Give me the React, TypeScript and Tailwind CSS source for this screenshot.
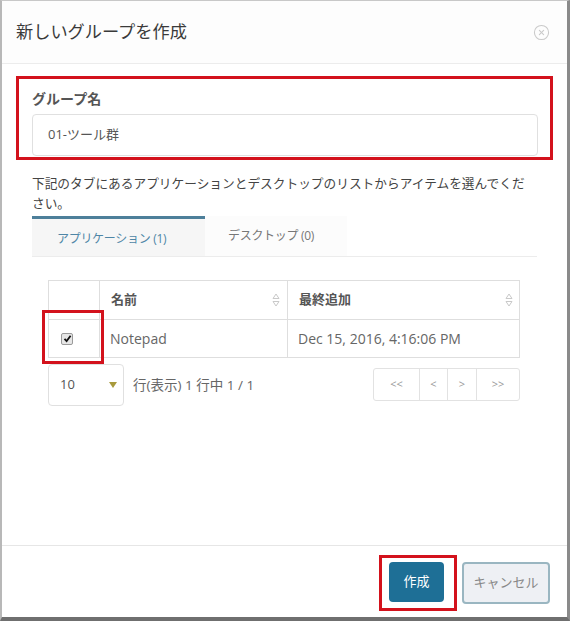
import { CircleX } from "lucide-react";

const jp = "font-['Open_Sans','Noto_Sans_CJK_JP',sans-serif]";

// up/down sort arrows shown in table headers
function SortIcon() {
  return (
    <svg width="8" height="14" viewBox="0 0 8 14" className="text-[#c9c9c9]">
      <path d="M4 1 L7 5.5 L1 5.5 Z" fill="none" stroke="currentColor" strokeWidth="1" />
      <path d="M4 13 L7 8.5 L1 8.5 Z" fill="none" stroke="currentColor" strokeWidth="1" />
    </svg>
  );
}

function CheckedBox() {
  return (
    <div className="w-[12px] h-[12px] rounded-[2px] border border-[#9a9a9a] bg-[#e6e6e6] flex items-center justify-center">
      <svg width="9" height="9" viewBox="0 0 9 9">
        <path d="M1.5 4.8 L3.6 7 L7.6 1.8" fill="none" stroke="#111" strokeWidth="1.8" />
      </svg>
    </div>
  );
}

const pages = [
  { label: "<<", w: "w-[45px]" },
  { label: "<", w: "w-[28px]" },
  { label: ">", w: "w-[29px]" },
  { label: ">>", w: "w-[43px]" },
];

export default function App() {
  return (
    <div
      className={`w-[570px] h-[621px] bg-white flex flex-col border-l-2 border-t border-r-[3px] border-b-[4px] border-l-[#b8b8b8] border-t-[#c8c8c8] border-r-[#8a8a8a] border-b-[#6f6f6f] ${jp}`}
    >
      {/* Header */}
      <div className="h-[63px] shrink-0 flex items-center justify-between pl-[14px] pr-[17px] border-b border-[#ececec] bg-[#fdfdfd]">
        <h1 className="text-[17.2px] text-[#3a3a3a]">新しいグループを作成</h1>
        <CircleX size={17} strokeWidth={1.5} className="text-[#cacaca]" />
      </div>

      {/* Body */}
      <div className="flex-1 px-[14px] pt-[12px]">
        <div className="border-[3px] border-[#d3121c] pl-[13px] pr-[12px] pt-[11px] pb-px">
          <label className="block text-[14px] font-bold text-[#555] leading-[18px]">
            グループ名
          </label>
          <div className="mt-[6px] h-[42px] border border-[#e0e0e0] rounded-[4px] flex items-center pl-[15px] text-[13px] text-[#555]">
            01-ツール群
          </div>
        </div>

        <div className="px-4">
          <p className="mt-[13px] w-[505px] text-[12.7px] leading-[20px] text-[#444]">
            下記のタブにあるアプリケーションとデスクトップのリストからアイテムを選んでください。
          </p>

          {/* Tabs */}
          <div className="mt-[3px] flex border-b border-[#ececec]">
            <div className="w-[173px] h-[40px] border-t-[3px] border-[#4d7f9a] bg-[#f6f6f6] flex items-center pl-[25px] pt-[2px] text-[12px] tracking-[-0.3px] text-[#4f86a6]">
              アプリケーション (1)
            </div>
            <div className="w-[142px] h-[40px] bg-[#fcfcfc] flex items-center pl-[23px] text-[12px] tracking-[-0.3px] text-[#777]">
              デスクトップ (0)
            </div>
          </div>

          {/* Table */}
          <div className="ml-[16px] mt-[23px] w-[472px] relative">
            <table className="w-full border-collapse text-[13px]">
              <thead>
                <tr className="h-[39px]">
                  <th className="w-[51px] border border-[#dedede]" />
                  <th className="w-[188px] border border-[#dedede] text-left font-bold text-[#555] pl-[11px] pr-[7px]">
                    <div className="flex items-center justify-between">
                      <span>名前</span>
                      <SortIcon />
                    </div>
                  </th>
                  <th className="border border-[#dedede] text-left font-bold text-[#555] pl-[11px] pr-[6px]">
                    <div className="flex items-center justify-between">
                      <span>最終追加</span>
                      <SortIcon />
                    </div>
                  </th>
                </tr>
              </thead>
              <tbody>
                <tr className="h-[38px] text-[14px] text-[#666]">
                  <td className="border border-[#dedede] pl-[12px]">
                    <CheckedBox />
                  </td>
                  <td className="border border-[#dedede] pl-[10px]">Notepad</td>
                  <td className="border border-[#dedede] pl-[10px]">Dec 15, 2016, 4:16:06 PM</td>
                </tr>
              </tbody>
            </table>
            {/* highlight around the selected row checkbox */}
            <div className="absolute left-[-6px] top-[30px] w-[62px] h-[54px] border-[3px] border-[#d3121c]" />

            {/* Pagination */}
            <div className="mt-[6px] flex items-start justify-between">
              <div className="flex items-center">
                <div className="w-[76px] h-[42px] border border-[#e0e0e0] rounded-[4px] flex items-center justify-between pl-[11px] pr-[6px] text-[13px] text-[#555]">
                  <span>10</span>
                  <svg width="8" height="6" viewBox="0 0 8 6">
                    <path d="M0 0 L8 0 L4 6 Z" fill="#a89a3c" />
                  </svg>
                </div>
                <span className="ml-[9px] text-[13.5px] text-[#666]">行(表示) 1 行中 1 / 1</span>
              </div>
              <div className="mt-[4px] flex h-[33px] border border-[#e2e2e2] rounded-[3px] text-[11px] text-[#999]">
                {pages.map((p, i) => (
                  <div
                    key={p.label}
                    className={`${p.w} flex items-center justify-center ${i > 0 ? "border-l border-[#e2e2e2]" : ""}`}
                  >
                    {p.label}
                  </div>
                ))}
              </div>
            </div>
          </div>
        </div>
      </div>

      {/* Footer */}
      <div className="shrink-0 h-[72px] border-t border-[#e6e6e6] flex justify-end items-start pt-[9px] pr-[17px]">
        <div className="border-[3px] border-[#d3121c] pl-[7px] pr-[10px] pt-[4px] pb-[6px]">
          <button className="w-[55px] h-[40px] rounded-[4px] bg-[#1e6f96] text-white text-[13px]">作成</button>
        </div>
        <button className="ml-[5px] mt-[7px] w-[88px] h-[42px] rounded-[4px] bg-[#eef0f4] border-2 border-[#9ab6c1] text-[#888] text-[13px]">
          キャンセル
        </button>
      </div>
    </div>
  );
}
